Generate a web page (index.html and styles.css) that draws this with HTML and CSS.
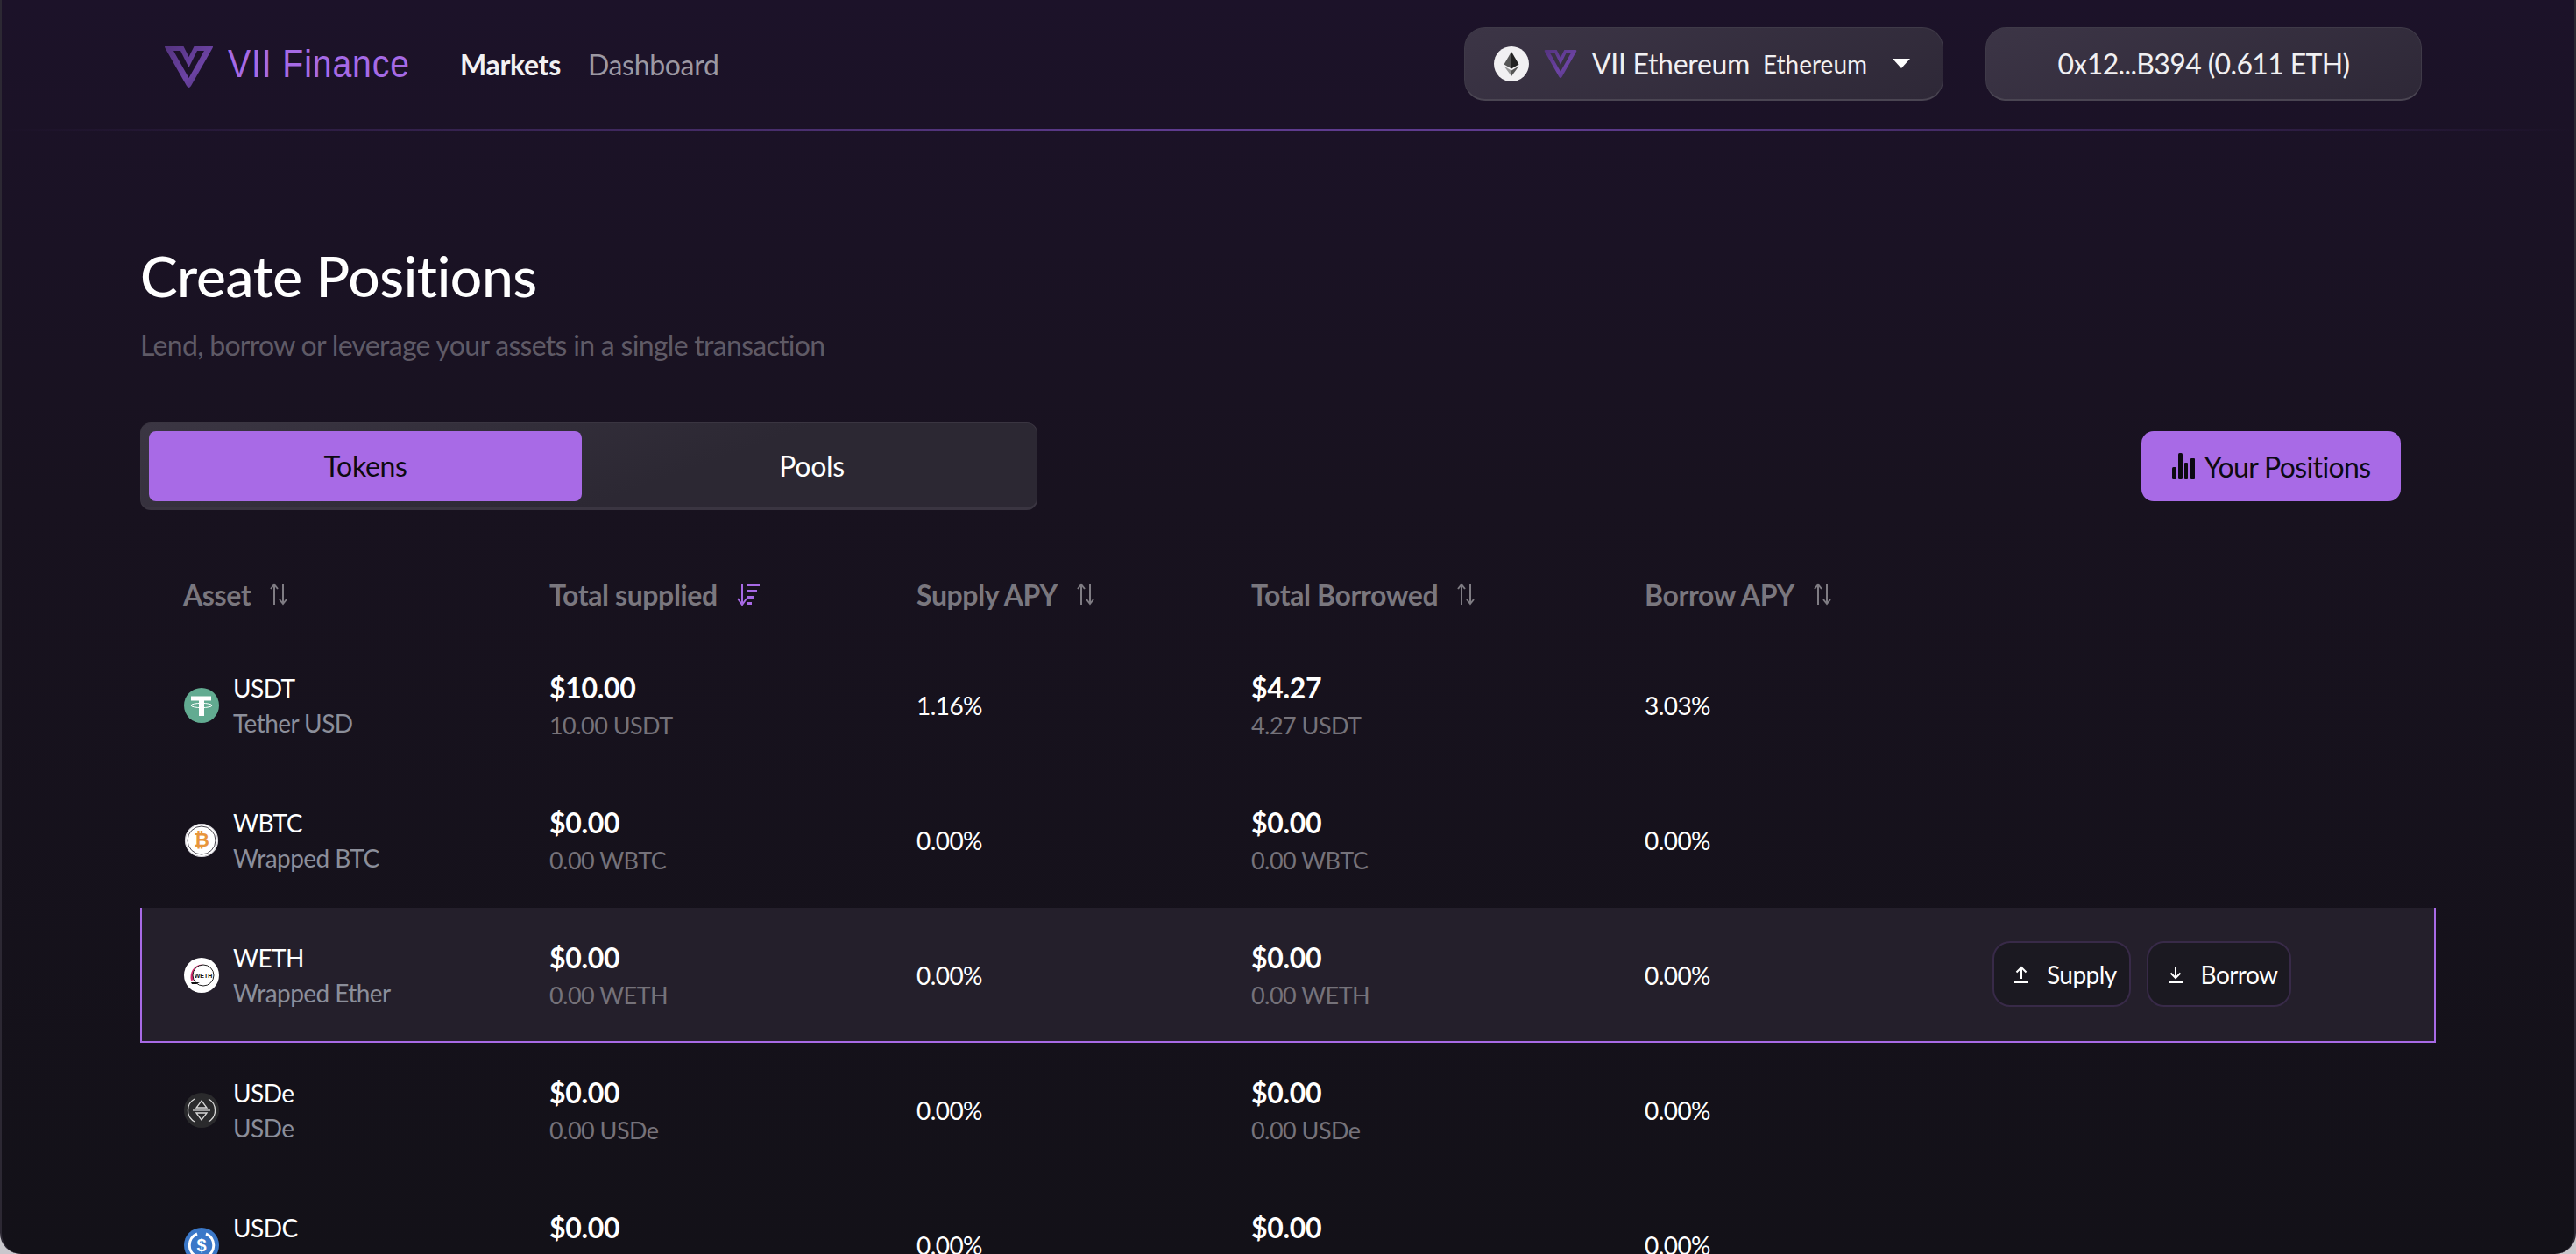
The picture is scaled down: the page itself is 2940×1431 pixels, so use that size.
FILE: index.html
```html
<!DOCTYPE html>
<html lang="en">
<head>
  <meta charset="UTF-8">
  <meta name="viewport" content="width=device-width, initial-scale=1.0">
  <title>VII Finance</title>
  <link rel="stylesheet" href="styles.css">
</head>
<body>
  <svg class="svg-defs" width="0" height="0">
    <defs>
      <linearGradient id="mark-fill" x1="0" y1="0" x2="1" y2="1">
        <stop offset="0" stop-color="#54337f"/>
        <stop offset="0.6" stop-color="#6c43a4"/>
        <stop offset="1" stop-color="#4e3278"/>
      </linearGradient>
      <symbol id="vii-mark" viewBox="0 0 57 50">
        <path d="M3 1H22L28.500 14L35 1H54Q57 1 55.500 4L31 47Q28.500 51 26 47L1.500 4Q0 1 3 1Z M11 7L28.500 38L46 7H38L28.500 26L19 7Z" fill-rule="evenodd" fill="url(#mark-fill)"/>
      </symbol>
      <symbol id="sort-icon" viewBox="0 0 22 28">
        <path d="M6 26V4M2 8l4-5 4 5M16 2v22M12 20l4 5 4-5" fill="none" stroke="currentColor" stroke-width="2"/>
      </symbol>
    </defs>
  </svg>

  <div class="app">
    <header class="top-bar">
      <div class="brand">
        <svg class="brand-mark"><use href="#vii-mark"/></svg>
        <span class="brand-name">VII Finance</span>
      </div>
      <nav class="main-nav">
        <a class="nav-link active">Markets</a>
        <a class="nav-link">Dashboard</a>
      </nav>
      <div class="top-actions">
        <button class="glass-btn network-btn">
          <svg class="eth-icon" viewBox="0 0 40 40">
            <circle cx="20" cy="20" r="20" fill="#f1f0f2"/>
            <path d="M20 6L11.500 20.500L20 25.500Z" fill="#555"/>
            <path d="M20 6L28.500 20.500L20 25.500Z" fill="#222"/>
            <path d="M11.500 22.500L20 34V27.500Z" fill="#999"/>
            <path d="M28.500 22.500L20 34V27.500Z" fill="#555"/>
          </svg>
          <svg class="network-mark"><use href="#vii-mark"/></svg>
          <span class="network-name">VII Ethereum</span>
          <span class="network-chain">Ethereum</span>
          <span class="caret"></span>
        </button>
        <button class="glass-btn wallet-btn">0x12...B394 (0.611 ETH)</button>
      </div>
    </header>

    <main class="page">
      <h1 class="page-title">Create Positions</h1>
      <p class="page-sub">Lend, borrow or leverage your assets in a single transaction</p>

      <div class="toolbar">
        <div class="tabs">
          <button class="tab active">Tokens</button>
          <button class="tab">Pools</button>
        </div>
        <button class="positions-btn">
          <svg class="bars-icon" viewBox="0 0 26 30">
            <rect x="0" y="16" width="5" height="14" rx="1.500"/>
            <rect x="7" y="0" width="5" height="30" rx="1.500"/>
            <rect x="14" y="11" width="4" height="19" rx="1"/>
            <rect x="21" y="6" width="5" height="24" rx="1"/>
          </svg>
          Your Positions
        </button>
      </div>

      <div class="market-table">
        <div class="table-row table-head">
          <div class="th">Asset <svg class="sort"><use href="#sort-icon"/></svg></div>
          <div class="th">Total supplied
            <svg class="sort sorted" viewBox="0 0 28 28">
              <path d="M7 2v22M2 19l5 7 5-7" fill="none" stroke="currentColor" stroke-width="2"/>
              <path d="M13 2h14v3H13zM13 9h11v3H13zM13 16h8v3h-8zM13 23h5v3h-5z" fill="currentColor"/>
            </svg>
          </div>
          <div class="th">Supply APY <svg class="sort"><use href="#sort-icon"/></svg></div>
          <div class="th">Total Borrowed <svg class="sort"><use href="#sort-icon"/></svg></div>
          <div class="th">Borrow APY <svg class="sort"><use href="#sort-icon"/></svg></div>
          <div></div>
        </div>

        <div class="table-row asset-row">
          <div class="asset">
            <svg class="token" viewBox="0 0 40 40">
              <circle cx="20" cy="20" r="20" fill="#62ab91"/>
              <path d="M8 9.500H31V14.500H23V32H17V14.500H8Z" fill="#fff"/>
              <ellipse cx="20" cy="20" rx="12" ry="2.600" fill="none" stroke="#fff" stroke-width="1"/>
            </svg>
            <div class="asset-text"><span class="symbol">USDT</span><span class="asset-name">Tether USD</span></div>
          </div>
          <div class="amount"><span class="usd">$10.00</span><span class="native">10.00 USDT</span></div>
          <div class="pct">1.16%</div>
          <div class="amount"><span class="usd">$4.27</span><span class="native">4.27 USDT</span></div>
          <div class="pct">3.03%</div>
          <div></div>
        </div>

        <div class="table-row asset-row">
          <div class="asset">
            <svg class="token" viewBox="0 0 40 40">
              <circle cx="20" cy="20" r="18.500" fill="#fff" stroke="#d8d6dc" stroke-width="1.200"/>
              <circle cx="20" cy="20" r="16" fill="none" stroke="#4a4650" stroke-width="1"/>
              <text class="btc-glyph" x="20" y="27" text-anchor="middle">₿</text>
            </svg>
            <div class="asset-text"><span class="symbol">WBTC</span><span class="asset-name">Wrapped BTC</span></div>
          </div>
          <div class="amount"><span class="usd">$0.00</span><span class="native">0.00 WBTC</span></div>
          <div class="pct">0.00%</div>
          <div class="amount"><span class="usd">$0.00</span><span class="native">0.00 WBTC</span></div>
          <div class="pct">0.00%</div>
          <div></div>
        </div>

        <div class="table-row asset-row hovered">
          <div class="asset">
            <svg class="token" viewBox="0 0 40 40">
              <circle cx="20" cy="20" r="20" fill="#fff"/>
              <path d="M8 26C6 17 11 8 21 7.500L23 10C16 11 11 17 13 25Z" fill="#d3296c"/>
              <circle cx="22" cy="20" r="12" fill="#fff" stroke="#222" stroke-width="1"/>
              <path d="M8 28h10l-4 2H9Z" fill="#111"/>
              <text class="weth-glyph" x="22" y="23" text-anchor="middle">WETH</text>
            </svg>
            <div class="asset-text"><span class="symbol">WETH</span><span class="asset-name">Wrapped Ether</span></div>
          </div>
          <div class="amount"><span class="usd">$0.00</span><span class="native">0.00 WETH</span></div>
          <div class="pct">0.00%</div>
          <div class="amount"><span class="usd">$0.00</span><span class="native">0.00 WETH</span></div>
          <div class="pct">0.00%</div>
          <div class="row-actions">
            <button class="action-btn">
              <svg class="action-icon" viewBox="0 0 16 20"><path d="M8 15V2M2.500 7.500L8 2l5.500 5.500M0 19h16" fill="none" stroke="currentColor" stroke-width="2"/></svg>
              Supply
            </button>
            <button class="action-btn">
              <svg class="action-icon" viewBox="0 0 16 20"><path d="M8 1v13M2.500 8.500L8 14l5.500-5.500M0 19h16" fill="none" stroke="currentColor" stroke-width="2"/></svg>
              Borrow
            </button>
          </div>
        </div>

        <div class="table-row asset-row">
          <div class="asset">
            <svg class="token" viewBox="0 0 40 40">
              <circle cx="20" cy="20" r="20" fill="#2a2a2c"/>
              <path d="M12 7A15 15 0 0 0 12 33M28 7A15 15 0 0 1 28 33" fill="none" stroke="#d8d8d8" stroke-width="1.300"/>
              <path d="M20 9L26 17H14ZM20 31L14 23H26Z" fill="none" stroke="#d8d8d8" stroke-width="1.300"/>
              <path d="M10 20H30" stroke="#d8d8d8" stroke-width="1.300"/>
            </svg>
            <div class="asset-text"><span class="symbol">USDe</span><span class="asset-name">USDe</span></div>
          </div>
          <div class="amount"><span class="usd">$0.00</span><span class="native">0.00 USDe</span></div>
          <div class="pct">0.00%</div>
          <div class="amount"><span class="usd">$0.00</span><span class="native">0.00 USDe</span></div>
          <div class="pct">0.00%</div>
          <div></div>
        </div>

        <div class="table-row asset-row">
          <div class="asset">
            <svg class="token" viewBox="0 0 40 40">
              <circle cx="20" cy="20" r="20" fill="#3b78c8"/>
              <path d="M15 7A14 14 0 0 0 15 33M25 7A14 14 0 0 1 25 33" fill="none" stroke="#fff" stroke-width="3"/>
              <text class="usdc-glyph" x="20" y="27" text-anchor="middle">$</text>
            </svg>
            <div class="asset-text"><span class="symbol">USDC</span><span class="asset-name">USD Coin</span></div>
          </div>
          <div class="amount"><span class="usd">$0.00</span><span class="native">0.00 USDC</span></div>
          <div class="pct">0.00%</div>
          <div class="amount"><span class="usd">$0.00</span><span class="native">0.00 USDC</span></div>
          <div class="pct">0.00%</div>
          <div></div>
        </div>
      </div>
    </main>
  </div>
</body>
</html>
```

FILE: styles.css
```css
* {
  margin: 0;
  padding: 0;
  box-sizing: border-box;
}

html {
  background: #c9c7cc;
}

body {
  font-family: Lato, "Open Sans", sans-serif;
  height: 100vh;
  overflow: hidden;
  color: #fff;
}

button {
  font-family: inherit;
  border: none;
  color: inherit;
}

.svg-defs {
  display: block;
  height: 0;
}

.app {
  height: 1431px;
  overflow: hidden;
  background: linear-gradient(180deg, #1c1229 0%, #18121f 40%, #131118 100%);
  border-left: 2px solid #2c2833;
  border-right: 2px solid #2c2833;
  border-radius: 0 0 24px 24px;
}

/* top bar */
.top-bar {
  height: 149px;
  display: flex;
  align-items: flex-start;
  padding: 31px 174px 0 185px;
  border-bottom: 2px solid transparent;
  border-image: linear-gradient(90deg, transparent 0%, #5e3b8e 45%, #5e3b8e 60%, transparent 100%) 1;
}

.brand {
  display: flex;
  align-items: center;
  height: 84px;
  width: 338px;
}

.brand-mark {
  width: 57px;
  height: 50px;
  margin-top: 6px;
}

.brand-name {
  font-family: "Liberation Sans", sans-serif;
  font-size: 44px;
  color: #a66ae6;
  margin-left: 16px;
  transform: scaleX(0.89);
  transform-origin: left center;
  white-space: nowrap;
  letter-spacing: 1px;
}

.main-nav {
  display: flex;
  gap: 31px;
  height: 84px;
  align-items: center;
  font-size: 32px;
  letter-spacing: -0.01em;
}

.nav-link {
  color: #9c98a2;
}

.nav-link.active {
  color: #f2f1f3;
  font-weight: 700;
}

.top-actions {
  display: flex;
  gap: 48px;
  margin-left: auto;
}

.glass-btn {
  height: 84px;
  display: flex;
  align-items: center;
  background: linear-gradient(160deg, #3c3546 0%, #2e2837 100%);
  border: 1px solid #3f3a48;
  border-bottom: 2px solid #4a4552;
  border-radius: 24px;
  font-size: 32px;
  letter-spacing: -0.02em;
  color: #f1f0f2;
}

.network-btn {
  width: 547px;
  padding-left: 33px;
}

.eth-icon {
  width: 40px;
  height: 40px;
}

.network-mark {
  width: 38px;
  height: 34px;
  margin-left: 17px;
}

.network-name {
  margin-left: 17px;
  letter-spacing: -0.01em;
}

.network-chain {
  font-size: 28px;
  letter-spacing: 0;
  margin-left: 15px;
}

.caret {
  width: 0;
  height: 0;
  border-left: 10px solid transparent;
  border-right: 10px solid transparent;
  border-top: 11px solid #fff;
  margin-left: 29px;
}

.wallet-btn {
  width: 498px;
  justify-content: center;
}

/* page head */
.page {
  padding: 0 158px;
}

.page-title {
  font-size: 64px;
  font-weight: 500;
  line-height: 80px;
  letter-spacing: -0.006em;
  margin-top: 126px;
}

.page-sub {
  font-size: 32px;
  line-height: 40px;
  letter-spacing: -0.7px;
  color: #5f5a66;
  margin-top: 19px;
}

.toolbar {
  display: flex;
  align-items: center;
  justify-content: space-between;
  margin-top: 68px;
  padding-right: 40px;
}

.tabs {
  width: 1024px;
  height: 100px;
  display: flex;
  padding: 9px 0 9px 9px;
  background: linear-gradient(160deg, #3b3643 0%, #2c2833 60%);
  border: 1px solid #3a3541;
  border-bottom: 3px solid #3a3541;
  border-radius: 12px;
}

.tab {
  flex: 1;
  height: 80px;
  padding-left: 6px;
  padding-bottom: 1px;
  background: transparent;
  font-size: 32px;
  letter-spacing: -0.01em;
  border-radius: 8px;
}

.tab.active {
  flex: 0 0 494px;
  padding-left: 0;
  background: #a86ae6;
  color: #0d0a12;
}

.positions-btn {
  width: 296px;
  height: 80px;
  display: flex;
  align-items: center;
  justify-content: center;
  gap: 11px;
  background: #a86ae6;
  color: #0d0a12;
  font-size: 32px;
  letter-spacing: -0.02em;
  border-radius: 14px;
}

.bars-icon {
  width: 26px;
  height: 30px;
  fill: #0d0a12;
}

/* market table */
.market-table {
  margin-top: 54px;
}

.table-row {
  display: grid;
  grid-template-columns: 418px 419px 382px 449px 397px 1fr;
  align-items: center;
  padding-left: 49px;
}

.table-head {
  height: 92px;
  padding-bottom: 8px;
}

.th {
  display: flex;
  align-items: center;
  gap: 21px;
  font-size: 32px;
  font-weight: 700;
  letter-spacing: -0.012em;
  color: #7a777e;
}

.sort {
  width: 22px;
  height: 28px;
  color: #7f7c83;
}

.sort.sorted {
  width: 28px;
  color: #a86ae6;
}

.asset-row {
  height: 154px;
}

.asset-row.hovered {
  background: #241f2b;
  box-shadow: inset 2px 0 0 #a86ae6, inset -2px 0 0 #a86ae6, inset 0 -2px 0 #a86ae6;
}

.asset {
  display: flex;
  align-items: center;
  gap: 16px;
  padding-left: 1px;
}

.token {
  width: 40px;
  height: 40px;
  flex: none;
}

.btc-glyph {
  font-family: "DejaVu Sans", sans-serif;
  font-size: 22px;
  font-weight: 700;
  fill: #e8963c;
}

.weth-glyph {
  font-family: "Liberation Sans", sans-serif;
  font-size: 7px;
  font-weight: 700;
  fill: #111;
}

.usdc-glyph {
  font-family: "Liberation Sans", sans-serif;
  font-size: 20px;
  font-weight: 700;
  fill: #fff;
}

.asset-text,
.amount {
  display: flex;
  flex-direction: column;
}

.amount {
  padding-top: 3px;
}

.symbol {
  font-size: 28px;
  line-height: 40px;
  letter-spacing: -0.02em;
}

.asset-name {
  font-size: 28px;
  line-height: 40px;
  letter-spacing: -0.02em;
  color: #8b8e9a;
}

.usd {
  font-size: 32px;
  font-weight: 700;
  line-height: 42px;
  letter-spacing: -0.01em;
}

.native {
  font-size: 27px;
  line-height: 44px;
  letter-spacing: -0.02em;
  color: #75727a;
}

.pct {
  font-size: 28px;
  letter-spacing: -0.02em;
}

.row-actions {
  display: flex;
  gap: 18px;
  margin-bottom: 3px;
}

.action-btn {
  height: 75px;
  display: flex;
  align-items: center;
  gap: 21px;
  padding: 0 14px 0 23px;
  background: #1b1921;
  border: 2px solid #382a48;
  border-radius: 20px;
  font-size: 28px;
  letter-spacing: -0.02em;
  color: #fff;
}

.action-icon {
  width: 16px;
  height: 20px;
}
```
